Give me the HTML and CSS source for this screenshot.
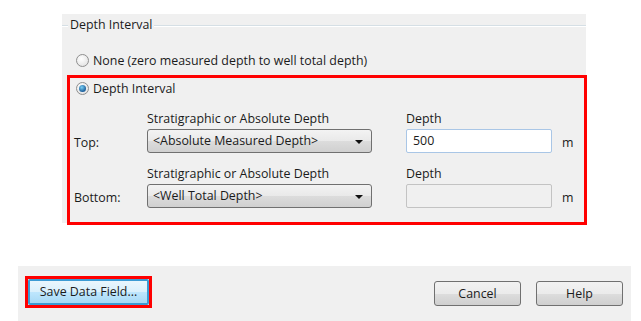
FILE: index.html
```html
<!DOCTYPE html>
<html lang="en">
<head>
    <meta charset="UTF-8">
    <title>Depth Interval</title>
    <link rel="stylesheet" href="styles.css">
</head>
<body>
    <div class="panel">
        <div class="legend"><span>Depth Interval</span></div>

        <label class="radio-row">
            <span class="radio"></span>
            None (zero measured depth to well total depth)
        </label>

        <div class="marked">
            <label class="radio-row">
                <span class="radio checked"></span>
                Depth Interval
            </label>

            <div class="depth-grid">
                <div></div>
                <div class="head">Stratigraphic or Absolute Depth</div>
                <div class="head">Depth</div>
                <div></div>

                <div class="side">Top:</div>
                <div class="combo">&lt;Absolute Measured Depth&gt;<span class="arrow"></span></div>
                <div class="field active">500</div>
                <div class="unit">m</div>

                <div class="gap"></div>

                <div></div>
                <div class="head">Stratigraphic or Absolute Depth</div>
                <div class="head">Depth</div>
                <div></div>

                <div class="side">Bottom:</div>
                <div class="combo">&lt;Well Total Depth&gt;<span class="arrow"></span></div>
                <div class="field disabled"></div>
                <div class="unit">m</div>
            </div>
        </div>
    </div>

    <div class="footer">
        <div class="marked-btn"><button class="btn default">Save Data Field...</button></div>
        <div class="spacer"></div>
        <button class="btn">Cancel</button>
        <button class="btn">Help</button>
    </div>
</body>
</html>
```

FILE: styles.css
```css
body {
    margin: 0;
    background-color: #fff;
    font-family: "Open Sans", "Liberation Sans", sans-serif;
    font-size: 12.4px;
    color: #1b1b1b;
    width: 641px;
    height: 321px;
    overflow: hidden;
}

.panel {
    margin: 14px 0 0 62px;
    width: 524px;
    height: 209px;
    background-color: #f0f0f0;
    box-sizing: border-box;
}

.legend {
    position: relative;
    height: 22px;
}

.legend::before {
    content: "";
    position: absolute;
    left: 0;
    right: 0;
    top: 11px;
    border-top: 1px solid #d5dfe5;
    border-bottom: 1px solid #fff;
}

.legend span {
    position: relative;
    background-color: #f0f0f0;
    padding: 0 2px;
    margin-left: 6px;
    line-height: 22px;
}

.radio-row {
    display: flex;
    align-items: center;
    gap: 4px;
    height: 16px;
    margin: 16px 0 0 14px;
}

.radio {
    width: 11px;
    height: 11px;
    border: 1px solid #8f8f8f;
    border-radius: 50%;
    background: radial-gradient(circle at 40% 35%, #ffffff, #dcdcdc);
    box-sizing: content-box;
    position: relative;
}

.radio.checked::after {
    content: "";
    position: absolute;
    left: 2px;
    top: 2px;
    width: 7px;
    height: 7px;
    border-radius: 50%;
    background: radial-gradient(circle at 40% 35%, #7ad0f5, #1c5e9a 70%);
}

.marked {
    margin: 7px 0 0 5px;
    width: 520px;
    height: 150px;
    border: 3px solid #ff0000;
    box-sizing: border-box;
}

.marked .radio-row {
    margin: 2px 0 0 6px;
}

.depth-grid {
    display: grid;
    grid-template-columns: 73px 259px 156px auto;
    margin: 14px 0 0 4px;
}

.head {
    height: 18px;
    line-height: 18px;
    margin-bottom: 1px;
}

.side {
    align-self: center;
    padding-top: 2px;
}

.gap {
    grid-column: 1 / -1;
    height: 12px;
}

.combo {
    position: relative;
    width: 225px;
    height: 24px;
    line-height: 22px;
    padding-left: 5px;
    border: 1px solid #707070;
    border-radius: 3px;
    background: linear-gradient(#f3f3f3, #e9e9e9 50%, #dcdcdc 51%, #d0d0d0);
    box-sizing: border-box;
}

.arrow {
    position: absolute;
    right: 8px;
    top: 10px;
    border-left: 4px solid transparent;
    border-right: 4px solid transparent;
    border-top: 4px solid #111;
}

.field {
    width: 146px;
    height: 24px;
    line-height: 22px;
    padding-left: 6px;
    border: 1px solid #abadb3;
    border-radius: 2px;
    box-sizing: border-box;
}

.field.active {
    background-color: #fff;
    border-color: #a9c6e6;
}

.field.disabled {
    background-color: #f0f0f0;
    border-color: #c3c3c3;
}

.unit {
    align-self: center;
    padding: 2px 0 0 0;
}

.footer {
    display: flex;
    align-items: center;
    gap: 15px;
    margin: 43px 0 0 18px;
    width: 613px;
    height: 55px;
    background-color: #f0f0f0;
    padding: 0 8px 0 7px;
    box-sizing: border-box;
}

.spacer {
    flex: 1;
}

.btn {
    font-family: inherit;
    font-size: 12.4px;
    color: #1b1b1b;
    width: 87px;
    height: 25px;
    padding: 0;
    border: 1px solid #707070;
    border-radius: 3px;
    background: linear-gradient(#f2f2f2, #ebebeb 50%, #dddddd 51%, #cfcfcf);
}

.marked-btn {
    border: 3px solid #ff0000;
    margin-top: -4px;
}

.btn.default {
    display: block;
    width: 121px;
    height: 26px;
    border: 2px solid #3c9bd4;
    border-radius: 2px;
    background: linear-gradient(#eaf6fd, #d9f0fc 50%, #bee6fd 51%, #a7d9f5);
}
```
